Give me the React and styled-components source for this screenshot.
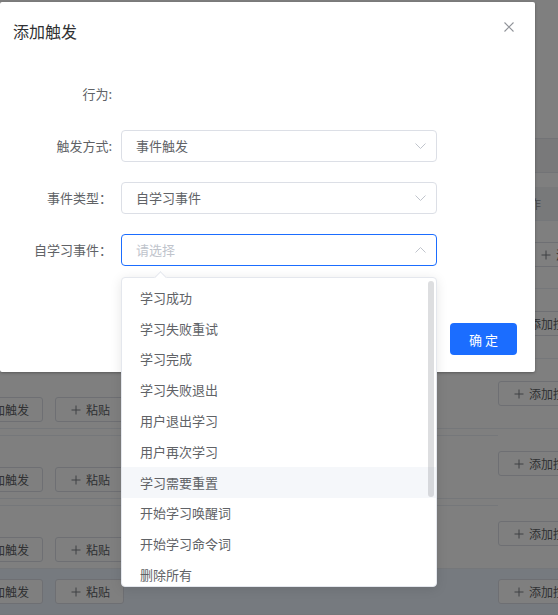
import React from "react";
import styled, { createGlobalStyle } from "styled-components";

const GlobalStyle = createGlobalStyle`
  html, body {
    margin: 0;
    padding: 0;
  }
  body {
    font-family: "Noto Sans CJK SC", "Noto Sans", sans-serif;
    -webkit-font-smoothing: antialiased;
  }
  * {
    box-sizing: border-box;
  }
`;

const Screen = styled.div`
  position: relative;
  width: 558px;
  height: 615px;
  overflow: hidden;
  background: #fff;
`;

/* ---------- page behind the dialog ---------- */

const Page = styled.div`
  display: flex;
  flex-direction: column;
  padding-top: 138px;
`;

const FilterBar = styled.div`
  height: 35px;
  margin-bottom: 14px;
  background: #f2f3f5;
  border-top: 1px solid #e4e7ed;
  border-bottom: 1px solid #e4e7ed;
`;

const UpperRow = styled.div`
  display: grid;
  grid-template-columns: 1fr 41px;
  align-items: center;
  height: ${(p) => p.$height}px;
  background: ${(p) => (p.$head ? "#f0f2f5" : "#fff")};
  border-bottom: 1px solid #ebeef5;
  font-size: 12px;
  color: #909399;
  white-space: nowrap;
`;

const ControlRow = styled.div`
  display: flex;
  align-items: stretch;
  height: ${(p) => p.$height}px;
  background: ${(p) => (p.$current ? "#ecf5ff" : "#fff")};
  border-bottom: 1px solid #ebeef5;
`;

const LeftCell = styled.div`
  flex: 1;
  display: flex;
  flex-direction: column;
  justify-content: ${(p) => (p.$compact ? "center" : "flex-end")};
  padding-top: ${(p) => (p.$compact ? 0 : 6)}px;
`;

const NestedBlock = styled.div`
  flex: ${(p) => (p.$compact ? "0" : "1")};
  display: flex;
  align-items: ${(p) => (p.$compact ? "center" : "flex-end")};
  gap: 12px;
  padding-bottom: ${(p) => (p.$compact ? 0 : 6)}px;
  border-top: ${(p) => (p.$compact ? "none" : "1px solid #ebeef5")};
  margin-left: -50px;
`;

const RightCell = styled.div`
  width: 60px;
  display: flex;
  align-items: center;
  white-space: nowrap;
`;

const GhostButton = styled.div`
  flex-shrink: 0;
  display: inline-flex;
  align-items: center;
  gap: 5px;
  height: 25px;
  padding: 0 13px 0 15px;
  margin-left: ${(p) => p.$offset || 0}px;
  border: 1px solid #dcdfe6;
  border-radius: 3px;
  background: #fff;
  font-size: 12px;
  line-height: 23px;
  color: #606266;
  white-space: nowrap;
`;

const PlusIcon = () => (
  <svg width="10" height="10" viewBox="0 0 10 10">
    <path d="M5 0.5v9M0.5 5h9" stroke="#7d8087" strokeWidth="1" />
  </svg>
);

const Mask = styled.div`
  position: absolute;
  inset: 0;
  background: rgba(0, 0, 0, 0.5);
`;

/* ---------- dialog ---------- */

const Dialog = styled.div`
  position: absolute;
  top: 2px;
  left: 0;
  width: 535px;
  background: #fff;
  border-radius: 2px;
  box-shadow: 0 1px 3px rgba(0, 0, 0, 0.3);
  display: flex;
  flex-direction: column;
`;

const DialogHeader = styled.div`
  display: flex;
  justify-content: space-between;
  align-items: flex-start;
  padding: 17px 21px 0 13px;
`;

const DialogTitle = styled.div`
  font-size: 16px;
  line-height: 24px;
  color: #303133;
`;

const CloseButton = styled.div`
  margin-top: 3px;
  width: 10px;
  height: 10px;
  display: flex;
`;

const DialogBody = styled.div`
  display: flex;
  flex-direction: column;
  gap: 20px;
  padding-top: 35px;
`;

const FormRow = styled.div`
  display: flex;
  align-items: center;
  height: 32px;
`;

const FormLabel = styled.div`
  width: 112px;
  flex-shrink: 0;
  text-align: right;
  font-size: 13px;
  line-height: 32px;
  color: #606266;
  white-space: nowrap;
`;

const SelectWrap = styled.div`
  position: relative;
  margin-left: 9px;
`;

const SelectBox = styled.div`
  width: 316px;
  height: 32px;
  display: flex;
  align-items: center;
  justify-content: space-between;
  padding: 0 10px 0 14px;
  border: 1px solid ${(p) => (p.$open ? "#1b6dff" : "#dcdfe6")};
  border-radius: 4px;
  background: #fff;
  font-size: 13px;
  line-height: 30px;
  color: ${(p) => (p.$empty ? "#c0c4cc" : "#606266")};
`;

const Chevron = ({ up }) => (
  <svg width="11" height="6" viewBox="0 0 11 6">
    <path
      d={up ? "M0.5 5.5L5.5 0.5L10.5 5.5" : "M0.5 0.5L5.5 5.5L10.5 0.5"}
      fill="none"
      stroke="#c0c4cc"
      strokeWidth="1"
    />
  </svg>
);

const Dropdown = styled.div`
  position: absolute;
  top: calc(100% + 11px);
  left: 0;
  width: 316px;
  height: 310px;
  background: #fff;
  border: 1px solid #e4e7ed;
  border-radius: 4px;
  box-shadow: 0 2px 12px rgba(0, 0, 0, 0.1);
  z-index: 2;

  &::before {
    content: "";
    position: absolute;
    top: -5px;
    left: 34px;
    width: 8px;
    height: 8px;
    background: #fff;
    border-top: 1px solid #e4e7ed;
    border-left: 1px solid #e4e7ed;
    transform: rotate(45deg);
  }
`;

const OptionList = styled.ul`
  list-style: none;
  margin: 0;
  padding: 4px 0;
  height: 100%;
  overflow: hidden;
`;

const Option = styled.li`
  height: 30.8px;
  padding-left: 18px;
  display: flex;
  align-items: center;
  font-size: 13px;
  color: #606266;
  white-space: nowrap;
  background: ${(p) => (p.$hover ? "#f5f7fa" : "transparent")};
`;

const ScrollThumb = styled.div`
  position: absolute;
  top: 3px;
  right: 2px;
  width: 6px;
  border-radius: 3px;
  background: rgba(144, 147, 153, 0.3);
`;

const DialogFooter = styled.div`
  display: flex;
  justify-content: flex-end;
  padding: 57px 18px 17px 0;
`;

const PrimaryButton = styled.div`
  height: 32px;
  padding: 0 19px;
  display: flex;
  align-items: center;
  border-radius: 4px;
  background: #1b6dff;
  color: #fff;
  font-size: 13px;
  white-space: pre;
`;

const eventOptions = [
  "学习成功",
  "学习失败重试",
  "学习完成",
  "学习失败退出",
  "用户退出学习",
  "用户再次学习",
  "学习需要重置",
  "开始学习唤醒词",
  "开始学习命令词",
  "删除所有",
  "删除唤醒词",
  "删除命令词",
  "学习超时",
  "退出学习模式",
];

const controlRows = [
  { height: 70 },
  { height: 70 },
  { height: 70 },
  { height: 70 },
  { height: 46, current: true },
];

const OPTION_HEIGHT = 30.8;
const LIST_VIEW = 308;

export default function App() {
  const contentHeight = eventOptions.length * OPTION_HEIGHT + 8;
  const thumbHeight = Math.round((LIST_VIEW * LIST_VIEW) / contentHeight);

  return (
    <>
      <GlobalStyle />
      <Screen>
        <Page>
          <FilterBar />
          <UpperRow $height={34} $head>
            <span />
            <span>操作</span>
          </UpperRow>
          <UpperRow $height={68}>
            <span />
            <div>
              <GhostButton $offset={8}>
                <PlusIcon />
                添加
              </GhostButton>
            </div>
          </UpperRow>
          {controlRows.map((row, i) => (
            <ControlRow key={i} $height={row.height} $current={row.current}>
              <LeftCell $compact={row.current}>
                <NestedBlock $compact={row.current}>
                  <GhostButton>
                    <PlusIcon />
                    添加触发
                  </GhostButton>
                  <GhostButton>
                    <PlusIcon />
                    粘贴
                  </GhostButton>
                </NestedBlock>
              </LeftCell>
              <RightCell>
                <GhostButton>
                  <PlusIcon />
                  添加控制
                </GhostButton>
              </RightCell>
            </ControlRow>
          ))}
        </Page>

        <Mask />

        <Dialog>
          <DialogHeader>
            <DialogTitle>添加触发</DialogTitle>
            <CloseButton>
              <svg width="10" height="10" viewBox="0 0 10 10">
                <path
                  d="M0.5 0.5L9.5 9.5M9.5 0.5L0.5 9.5"
                  stroke="#909399"
                  strokeWidth="1.1"
                />
              </svg>
            </CloseButton>
          </DialogHeader>

          <DialogBody>
            <FormRow>
              <FormLabel>行为:</FormLabel>
            </FormRow>
            <FormRow>
              <FormLabel>触发方式:</FormLabel>
              <SelectWrap>
                <SelectBox>
                  <span>事件触发</span>
                  <Chevron />
                </SelectBox>
              </SelectWrap>
            </FormRow>
            <FormRow>
              <FormLabel>事件类型：</FormLabel>
              <SelectWrap>
                <SelectBox>
                  <span>自学习事件</span>
                  <Chevron />
                </SelectBox>
              </SelectWrap>
            </FormRow>
            <FormRow>
              <FormLabel>自学习事件：</FormLabel>
              <SelectWrap>
                <SelectBox $open $empty>
                  <span>请选择</span>
                  <Chevron up />
                </SelectBox>
                <Dropdown>
                  <OptionList>
                    {eventOptions.map((label, i) => (
                      <Option key={label} $hover={i === 6}>
                        {label}
                      </Option>
                    ))}
                  </OptionList>
                  <ScrollThumb style={{ height: thumbHeight }} />
                </Dropdown>
              </SelectWrap>
            </FormRow>
          </DialogBody>

          <DialogFooter>
            <PrimaryButton>确 定</PrimaryButton>
          </DialogFooter>
        </Dialog>
      </Screen>
    </>
  );
}
